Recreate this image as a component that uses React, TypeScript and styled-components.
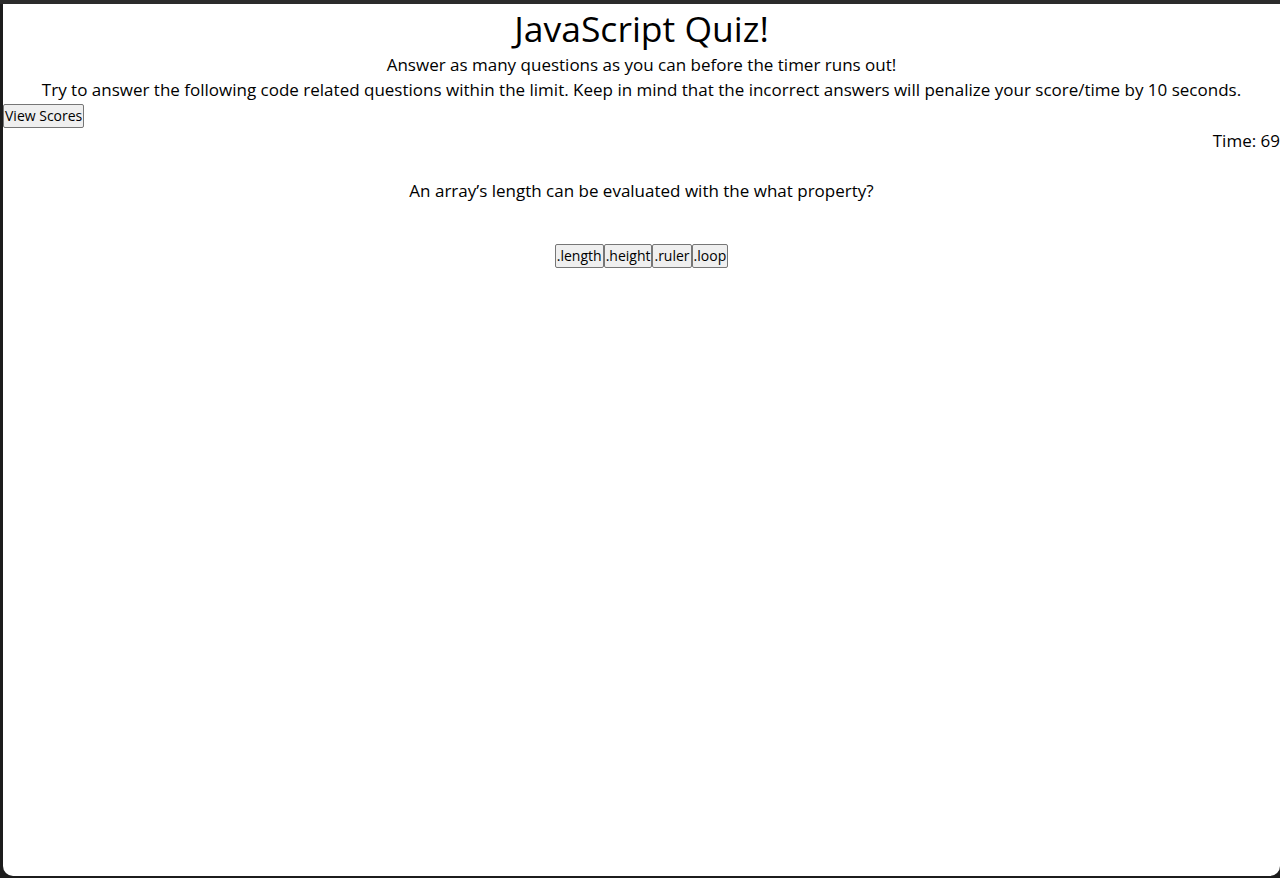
import React from "react";
import styled, { createGlobalStyle } from "styled-components";

const GlobalStyle = createGlobalStyle`
  html, body {
    margin: 0;
    padding: 0;
    background: #1c1c1c;
  }
`;

const answers = [".length", ".height", ".ruler", ".loop"];

export default function App() {
  return (
    <>
      <GlobalStyle />
      <Screen>
        <Panel>
          <Header>
            <Title>JavaScript Quiz!</Title>
            <Lead>Answer as many questions as you can before the timer runs out!</Lead>
            <Lead>
              Try to answer the following code related questions within the limit. Keep in mind that the
              incorrect answers will penalize your score/time by 10 seconds.
            </Lead>
          </Header>
          <ScoresRow>
            <Button>View Scores</Button>
          </ScoresRow>
          <Timer>Time: 69</Timer>
          <Question>An array’s length can be evaluated with the what property?</Question>
          <Choices>
            {answers.map((a) => (
              <Button key={a}>{a}</Button>
            ))}
          </Choices>
        </Panel>
      </Screen>
    </>
  );
}

const Screen = styled.div`
  height: 878px;
  box-sizing: border-box;
  border-top: 4px solid #2b2b2b;
  padding: 0 0 2px 3px;
  display: flex;
`;

const Panel = styled.div`
  flex: 1;
  background: #fff;
  border-radius: 0 0 10px 10px;
  font-family: "Open Sans", sans-serif;
  color: #000;
`;

const Header = styled.header`
  text-align: center;
`;

const Title = styled.h1`
  margin: 0;
  font-size: 35.5px;
  font-weight: 400;
  line-height: 48px;
`;

const Lead = styled.p`
  margin: 0;
  font-size: 17px;
  line-height: 25px;
`;

const ScoresRow = styled.div`
  display: flex;
  margin-top: 2px;
`;

const Button = styled.button`
  font-family: inherit;
  font-size: 14px;
  color: #000;
  background: #efefef;
  border: 1px solid #767676;
  border-radius: 2px;
  padding: 0 1px;
  height: 24px;
  line-height: 20px;
`;

const Timer = styled.div`
  text-align: right;
  font-size: 17px;
  line-height: 25px;
`;

const Question = styled.p`
  text-align: center;
  font-size: 17px;
  line-height: 25px;
  margin: 25px 0 0;
`;

const Choices = styled.div`
  display: flex;
  justify-content: center;
  margin-top: 41px;
`;
